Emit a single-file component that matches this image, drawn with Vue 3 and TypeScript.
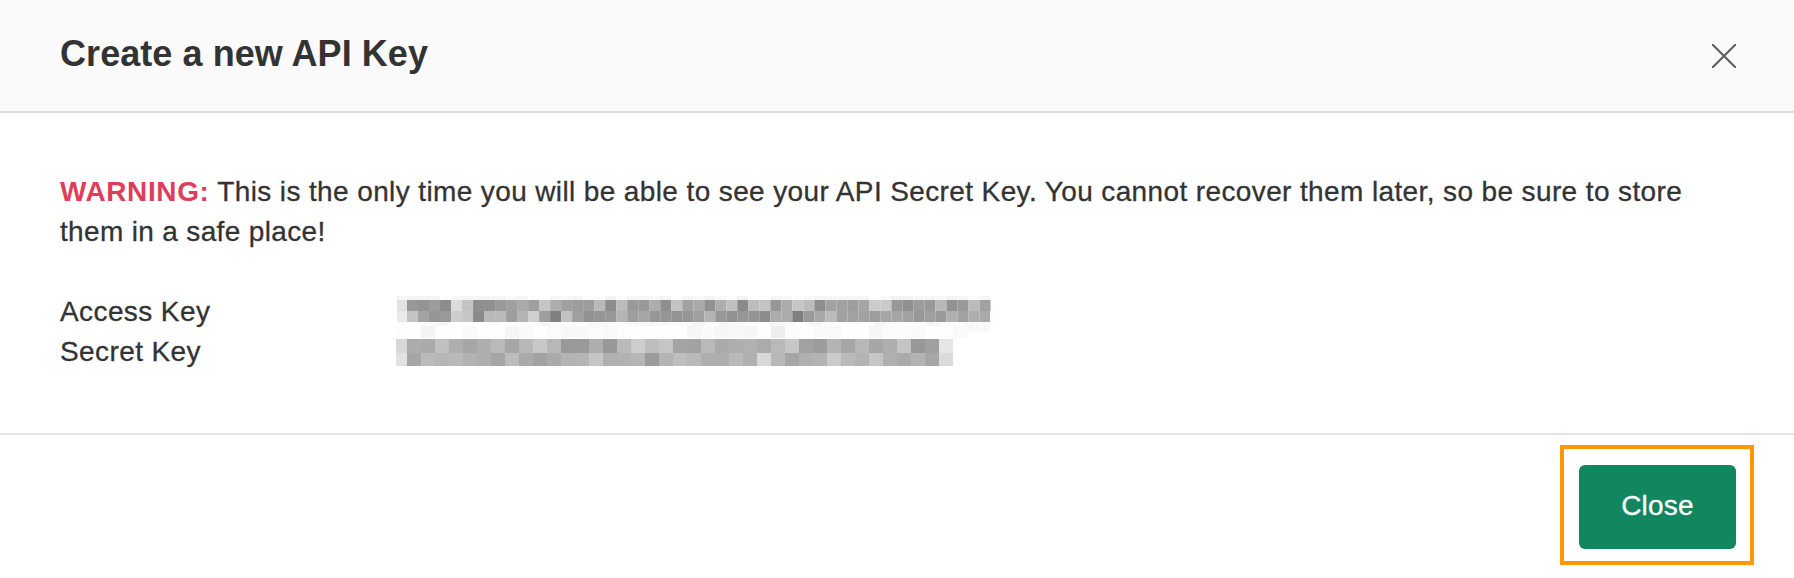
<script setup lang="ts">
interface Cell { x: number; y: number; w: number; h: number; fill: string }

const toCells = (shades: string, x: number, y: number, w: number, h: number): Cell[] =>
  shades.split(' ').map((s, i) => ({ x: x + i * w, y, w: w + 0.05, h, fill: `#${s}${s}${s}` }))

// Masked key values, one grey shade per mosaic cell.
const accessCells: Cell[] = [
  ...toCells('f5 f5 f5 f5 fc f6 f6 f6 f6 f6 f8 f5 fe fd f6 f8 f6 fb fb f4 fc f6 f6 f8 f4 fd f6 f8 f5 f8 fb f4 fc fd f5 f8 fc f9 f5 f6 f6 f6 f6 fe f9 f4 f4 f6 f5 f8 f5 f6 fa f5', 0, 0, 11, 4),
  ...toCells('e2', 1, 4, 10, 11),
  ...toCells('98 94 9c 8c dc c3 8e 90 9a a0 aa 9f c6 ad a0 9c 9c b9 8c bc 9a 99 ad 8e c3 a2 aa 92 ae c0 8a bc c4 97 ac c6 bc 8e a2 a2 9e a6 cc ca 98 90 9c 98 b8 92 9a bc a2', 11, 4, 11.01, 11),
  ...toCells('ea', 1, 15, 10, 11),
  ...toCells('c3 a4 96 99 cd c6 8a b9 b9 9e b4 cf 9e 80 c2 a0 92 96 98 b4 9e a6 98 96 93 96 a0 b4 98 92 96 94 8c ac ac 80 9a a8 bc a2 a2 a2 9e a6 a6 a2 98 a0 9a b0 a2 ae aa', 11, 15, 11.01, 11),
  ...toCells('fd', 594, 15, 9, 11),
  ...toCells('fe fe fa f6 fe fe fe f9 fe fe fb f6 fb fe fe f8 f9 fa f9 f6 f8 fa fb f6 fe f6 f9 fc fe f6 f9 fe f6 fc fe fc fe f6 fb fe fc f6 fb fe fa f8', 0, 26, 12.9, 4),
  ...toCells('f8', 571, 26, 23, 10),
]
const secretCells: Cell[] = [
  ...toCells('fd', 0, 0, 11, 13),
  ...toCells('fe f4 fe fe fa fe fe f6 fa fe fb f8 f8 fb f9 fd fe fe fe fe f6 fa f6 f8 f6 fd ee fc fe fa f9 fe fe f6 fb fc f9 fe fd f9', 11, 0, 14, 12),
  ...toCells('d8', 0, 13, 11, 14),
  ...toCells('ac aa c0 ae a6 ae b9 a6 b8 c8 b7 99 9a ae 98 ba cd be c6 a4 a2 b9 aa ae b1 ab b9 c6 a2 9c b4 a6 b8 a6 ae c4 98 a0 e6', 11, 13, 14, 14),
  ...toCells('e2', 0, 27, 11, 13),
  ...toCells('a6 bb b6 b9 b2 ae a6 bc aa a2 aa b3 b6 c6 b0 b2 b6 9c b4 bf b9 ae ae b9 b0 d8 b8 a6 b0 b4 ca ba b4 c6 b0 aa b4 a6 da', 11, 27, 14, 13),
]
</script>

<template>
  <section class="modal">
    <header class="head">
      <h1 class="title">Create a new API Key</h1>
      <svg class="dismiss" width="24" height="24" viewBox="0 0 24 24">
        <path d="M0 0L24 24M24 0L0 24" fill="none" stroke="#5c5c5c" stroke-width="2" />
      </svg>
    </header>
    <main class="body">
      <p class="notice">
        <strong class="warning">WARNING:</strong> <span class="first">This is the only time you will be able to see your API Secret Key. You cannot recover them later, so be sure to store</span><br />
        <span class="second">them in a safe place!</span>
      </p>
      <div class="keys">
        <div class="labels">
          <div class="label access">Access Key</div>
          <div class="label secret">Secret Key</div>
        </div>
        <div class="values">
          <svg class="mosaic access-value" width="610" height="36">
            <rect v-for="(c, i) in accessCells" :key="i" :x="c.x" :y="c.y" :width="c.w" :height="c.h" :fill="c.fill" />
          </svg>
          <svg class="mosaic" width="610" height="40">
            <rect v-for="(c, i) in secretCells" :key="i" :x="c.x" :y="c.y" :width="c.w" :height="c.h" :fill="c.fill" />
          </svg>
        </div>
      </div>
    </main>
    <footer class="foot">
      <div class="highlight">
        <button class="close" type="button">Close</button>
      </div>
    </footer>
  </section>
</template>

<style>
body { margin: 0; background: #fff; }
</style>

<style scoped>
.modal {
  box-sizing: border-box;
  width: 1794px;
  height: 578px;
  overflow: hidden;
  background: #fff;
  color: #333;
  font-family: "Liberation Sans", Arial, sans-serif;
  font-size: 28px;
  line-height: 40px;
}
.head {
  box-sizing: border-box;
  display: flex;
  justify-content: space-between;
  height: 113px;
  padding: 34px 58px 0 60px;
  background: #fafafa;
  border-bottom: 2px solid #dfdfdf;
}
.title { margin: 0; font-size: 36px; line-height: 40px; font-weight: 700; letter-spacing: 0.06px; white-space: nowrap; }
.dismiss { margin-top: 10px; }
.body { box-sizing: border-box; height: 320px; padding: 59px 60px 0; }
.notice { margin: 0; white-space: nowrap; -webkit-text-stroke: 0.3px currentColor; }
.warning { color: #dc3e5b; letter-spacing: 0.6px; -webkit-text-stroke: 0; }
.first { letter-spacing: 0.38px; }
.second { letter-spacing: 0.34px; }
.keys { display: flex; margin-top: 40px; }
.labels { width: 336px; -webkit-text-stroke: 0.3px currentColor; }
.label { letter-spacing: 0.4px; white-space: nowrap; }
.values { display: flex; flex-direction: column; padding-top: 4px; }
.mosaic { display: block; }
.access-value { margin-bottom: -6px; }
.foot {
  box-sizing: border-box;
  display: flex;
  justify-content: flex-end;
  height: 145px;
  padding: 10px 40px 0 0;
  border-top: 2px solid #e4e4e4;
}
.highlight {
  box-sizing: border-box;
  width: 194px;
  height: 120px;
  padding: 16px 14px 0 15px;
  border: 4px solid #ff9800;
}
.close {
  display: block;
  box-sizing: border-box;
  width: 157px;
  height: 84px;
  padding: 0 0 2px;
  border: 0;
  border-radius: 6px;
  background: #11865f;
  color: #fff;
  font: 28px/40px "Liberation Sans", Arial, sans-serif;
  letter-spacing: 0.2px;
  -webkit-text-stroke: 0.3px currentColor;
}
</style>
